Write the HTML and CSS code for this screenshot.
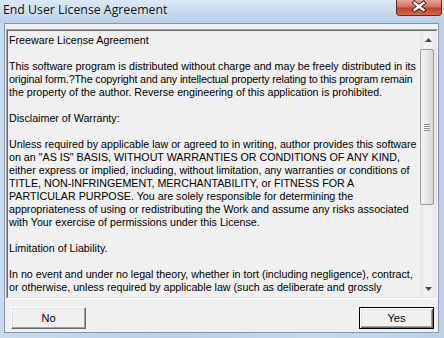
FILE: index.html
```html
<html>
<head>
<link rel="stylesheet" href="styles.css">
</head>
<body>
<div class="window">
  <div class="titlebar">
    <span class="title">End User License Agreement</span>
    <span class="close">
      <svg width="46" height="16" viewBox="0 0 46 16">
        <path d="M18.5 4 L27.5 11 M27.5 4 L18.5 11" stroke="#3b1a14" stroke-width="4.2" stroke-linecap="square"/>
        <path d="M18.5 4 L27.5 11 M27.5 4 L18.5 11" stroke="#fff" stroke-width="2.4" stroke-linecap="square"/>
      </svg>
    </span>
  </div>
  <div class="frame">
    <div class="client">
      <div class="edit">
        <div class="edit-inner">
          <div class="text">
            <p>Freeware License Agreement</p>
            <p>This software program is distributed without charge and may be freely distributed in its<br>
            <span class="tight">original form.?The copyright and any intellectual property relating to this program remain</span><br>
            the property of the author. Reverse engineering of this application is prohibited.</p>
            <p>Disclaimer of Warranty:</p>
            <p>Unless required by applicable law or agreed to in writing, author provides this software<br>
            on an "AS IS" BASIS, WITHOUT WARRANTIES OR CONDITIONS OF ANY KIND,<br>
            either express or implied, including, without limitation, any warranties or conditions of<br>
            TITLE, NON-INFRINGEMENT, MERCHANTABILITY, or FITNESS FOR A<br>
            PARTICULAR PURPOSE. You are solely responsible for determining the<br>
            appropriateness of using or redistributing the Work and assume any risks associated<br>
            with Your exercise of permissions under this License.</p>
            <p>Limitation of Liability.</p>
            <p>In no event and under no legal theory, whether in tort (including negligence), contract,<br>
            or otherwise, unless required by applicable law (such as deliberate and grossly</p>
          </div>
          <div class="scrollbar">
            <div class="arrow">
              <svg width="7" height="4" viewBox="0 0 7 4"><polygon points="0,4 3.5,0 7,4" fill="#4a4a4a"/></svg>
            </div>
            <div class="track">
              <div class="thumb"><span class="grip"></span></div>
            </div>
            <div class="arrow">
              <svg width="7" height="4" viewBox="0 0 7 4"><polygon points="0,0 7,0 3.5,4" fill="#4a4a4a"/></svg>
            </div>
          </div>
        </div>
      </div>
      <div class="buttons">
        <button class="btn">No</button>
        <button class="btn btn-default">Yes</button>
      </div>
    </div>
  </div>
</div>
</body>
</html>
```

FILE: styles.css
```css
body {
  margin: 0;
  font-family: "Liberation Sans", Arial, sans-serif;
  font-size: 11px;
  color: #000;
  background-color: #c6d7ea;
}

.window {
  width: 444px;
  height: 338px;
  display: flex;
  flex-direction: column;
  overflow: hidden;
  background: linear-gradient(to right, #c9dbee, #b9d0e8 40%, #c6d9ed 70%, #bcd2e9);
}

.titlebar {
  height: 23px;
  display: flex;
  align-items: flex-start;
  padding-left: 3px;
  background: linear-gradient(to bottom, #dbe8f5, #c3d7ec 60%, #b8cfe7);
}

.title {
  font-family: "Open Sans", "Noto Sans", sans-serif;
  font-size: 12.3px;
  line-height: 20px;
  color: #111;
  text-shadow: 0 0 6px rgba(255, 255, 255, 0.9);
}

.close {
  margin-left: auto;
  margin-right: 2px;
  width: 46px;
  height: 16px;
  flex-shrink: 0;
  box-sizing: border-box;
  border: 1px solid #6d2619;
  border-top: 0;
  border-radius: 0 0 4px 4px;
  background: linear-gradient(to bottom, #e7a595, #d27160 45%, #c4402a 55%, #d4694f);
}

.close svg {
  display: block;
  margin: -1px 0 0 -1px;
}

.frame {
  flex: 1;
  display: flex;
  padding: 0 5px 5px 4px;
}

.client {
  flex: 1;
  min-width: 0;
  display: flex;
  flex-direction: column;
  padding: 5px 0 3px 0;
  border: 1px solid #8596aa;
  background-color: #f0f0f0;
}

.edit {
  height: 270px;
  margin-left: 1px;
  box-sizing: border-box;
  border: 1px solid;
  border-color: #a0a0a0 #fff #fff #a0a0a0;
}

.edit-inner {
  height: 100%;
  box-sizing: border-box;
  display: flex;
  border: 1px solid;
  border-color: #696969 #e3e3e3 #e3e3e3 #696969;
}

.text {
  flex: 1;
  min-width: 0;
  overflow: hidden;
  padding: 3px 0 0 1px;
  font-size: 10.7px;
  line-height: 13px;
  white-space: nowrap;
}

.text p {
  margin: 0 0 13px 0;
}

.tight {
  letter-spacing: -0.15px;
}

.scrollbar {
  width: 17px;
  flex-shrink: 0;
  display: flex;
  flex-direction: column;
  background: linear-gradient(to right, #e3e3e3, #f2f2f2 30%, #f0f0f0 70%, #e8e8e8);
  border-left: 1px solid #f6f6f6;
  box-sizing: border-box;
}

.arrow {
  height: 17px;
  display: flex;
  align-items: center;
  justify-content: center;
}

.track {
  flex: 1;
  display: flex;
  flex-direction: column;
}

.thumb {
  height: 156px;
  margin: 1px 2px 0 0;
  box-sizing: border-box;
  border: 1px solid #9a9a9a;
  border-radius: 2px;
  background: linear-gradient(to right, #f4f4f4, #e8e8e8 50%, #d7d7d7);
  display: flex;
  align-items: center;
  justify-content: center;
}

.grip {
  width: 6px;
  height: 7px;
  background: repeating-linear-gradient(to bottom, #8a8a8a 0, #8a8a8a 1px, #f4f4f4 1px, #f4f4f4 2px);
}

.buttons {
  margin-top: 8px;
  display: flex;
  justify-content: space-between;
  padding: 0 4px 0 6px;
}

.btn {
  width: 75px;
  height: 22px;
  padding: 0;
  font-family: "Liberation Sans", Arial, sans-serif;
  font-size: 11px;
  color: #000;
  background-color: #f0f0f0;
  border: 1px solid;
  border-color: #fff #696969 #696969 #fff;
  box-shadow: inset -1px -1px #a0a0a0, inset 1px 1px #e3e3e3;
}

.btn-default {
  border-color: #000;
  box-shadow: inset 1px 1px #fff, inset -1px -1px #696969, inset 2px 2px #e3e3e3, inset -2px -2px #a0a0a0;
}
```
